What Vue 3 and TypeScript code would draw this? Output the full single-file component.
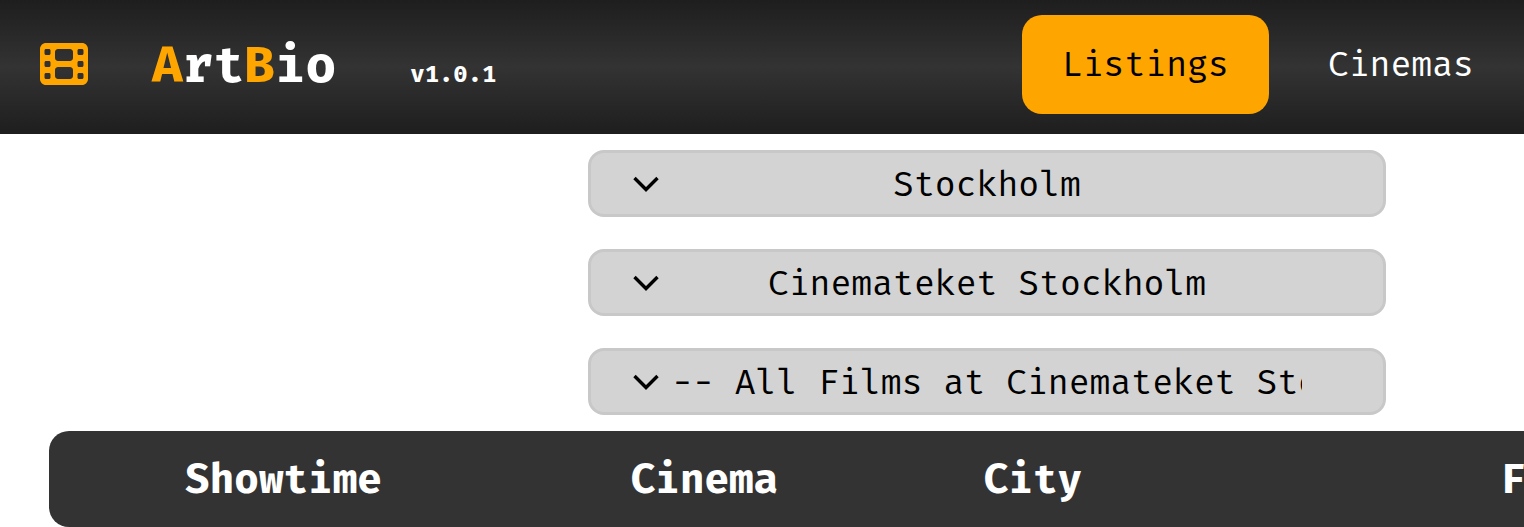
<script setup lang="ts">
const selects: string[] = ['Stockholm', 'Cinemateket Stockholm', '-- All Films at Cinemateket Stockholm --']
const columns: string[] = ['Showtime', 'Cinema', 'City', 'Film']
</script>

<template>
  <div class="page">
    <header class="topbar">
      <div class="brand">
        <svg class="film" viewBox="0 0 512 512" aria-hidden="true">
          <path fill="#ffa500" d="M0 96C0 60.7 28.7 32 64 32H448c35.3 0 64 28.7 64 64V416c0 35.3-28.7 64-64 64H64c-35.3 0-64-28.7-64-64V96zM48 368v32c0 8.8 7.2 16 16 16H96c8.8 0 16-7.2 16-16V368c0-8.8-7.2-16-16-16H64c-8.8 0-16 7.2-16 16zm368-16c-8.8 0-16 7.2-16 16v32c0 8.8 7.2 16 16 16h32c8.8 0 16-7.2 16-16V368c0-8.8-7.2-16-16-16H416zM48 240v32c0 8.8 7.2 16 16 16H96c8.8 0 16-7.2 16-16V240c0-8.8-7.2-16-16-16H64c-8.8 0-16 7.2-16 16zm368-16c-8.8 0-16 7.2-16 16v32c0 8.8 7.2 16 16 16h32c8.8 0 16-7.2 16-16V240c0-8.8-7.2-16-16-16H416zM48 112v32c0 8.8 7.2 16 16 16H96c8.8 0 16-7.2 16-16V112c0-8.8-7.2-16-16-16H64c-8.8 0-16 7.2-16 16zM416 96c-8.8 0-16 7.2-16 16v32c0 8.8 7.2 16 16 16h32c8.8 0 16-7.2 16-16V112c0-8.8-7.2-16-16-16H416zM160 128v64c0 17.7 14.3 32 32 32H320c17.7 0 32-14.3 32-32V128c0-17.7-14.3-32-32-32H192c-17.7 0-32 14.3-32 32zm32 160c-17.7 0-32 14.3-32 32v64c0 17.7 14.3 32 32 32H320c17.7 0 32-14.3 32-32V320c0-17.7-14.3-32-32-32H192z" />
        </svg>
        <div class="wordmark">
          <span class="logo"><span class="accent">A</span>rt<span class="accent">B</span>io</span>
          <span class="version">v1.0.1</span>
        </div>
      </div>
      <nav class="nav">
        <a class="nav-item active">Listings</a>
        <a class="nav-item">Cinemas</a>
      </nav>
    </header>

    <section class="filters">
      <div v-for="label in selects" :key="label" class="select">
        <svg class="chevron" viewBox="0 0 26 16" aria-hidden="true">
          <path d="M1.5 2 L13 13.5 L24.5 2" fill="none" stroke="#000" stroke-width="3.4" />
        </svg>
        <span class="select-text">{{ label }}</span>
      </div>
    </section>

    <div class="table-wrap">
      <div class="table-head">
        <div v-for="col in columns" :key="col" class="cell">{{ col }}</div>
      </div>
    </div>
  </div>
</template>

<style>
html, body { margin: 0; padding: 0; background: #fff; overflow: hidden; }
</style>

<style scoped>
.page {
  width: 1524px;
  height: 527px;
  overflow: hidden;
  font-family: "Fira Mono", "DejaVu Sans Mono", monospace;
}
.topbar {
  height: 134px;
  display: flex;
  align-items: center;
  justify-content: space-between;
  background: linear-gradient(to bottom, #1e1e1e, #333 50%, #1e1e1e);
  padding: 0 10px 0 40px;
  box-sizing: border-box;
}
.brand {
  display: flex;
  align-items: center;
  gap: 64px;
}
.film {
  width: 48px;
  height: 48px;
  display: block;
  margin-bottom: 6px;
}
.wordmark {
  display: flex;
  align-items: baseline;
  gap: 74px;
  margin-bottom: 5px;
}
.logo {
  font-size: 51.2px;
  font-weight: 700;
  color: #fff;
}
.accent { color: #ffa500; }
.version {
  font-size: 23.9px;
  font-weight: 700;
  color: #fff;
}
.nav {
  display: flex;
  align-items: center;
  gap: 19px;
  margin-bottom: 5px;
}
.nav-item {
  font-size: 34.8px;
  color: #fff;
  padding: 0 40px;
  height: 99px;
  line-height: 99px;
  border-radius: 20px;
}
.nav-item.active {
  background: #ffa500;
  color: #000;
}
.filters {
  display: flex;
  flex-direction: column;
  align-items: center;
  gap: 32px;
  padding-top: 16px;
  padding-left: 450px;
}
.select {
  width: 798px;
  height: 67px;
  box-sizing: border-box;
  border: 3px solid #c8c8c8;
  border-radius: 16px;
  background: #d3d3d3;
  display: flex;
  align-items: center;
  padding: 0 81px 0 42px;
  color: #000;
  font-size: 34.8px;
}
.chevron {
  width: 26px;
  height: 16px;
  flex: none;
  margin-right: 13px;
}
.select-text {
  flex: 1;
  min-width: 0;
  overflow: hidden;
  white-space: nowrap;
  text-align: center;
}
.select:last-child .select-text { text-align: left; }
.table-wrap {
  margin-top: 16px;
  margin-left: 49px;
  width: 1876px;
}
.table-head {
  height: 96px;
  background: #333;
  border-radius: 20px;
  display: grid;
  grid-template-columns: 469px 373px 284px 750px;
  align-items: center;
}
.cell {
  font-size: 41px;
  font-weight: 700;
  color: #fff;
  text-align: center;
}
</style>
